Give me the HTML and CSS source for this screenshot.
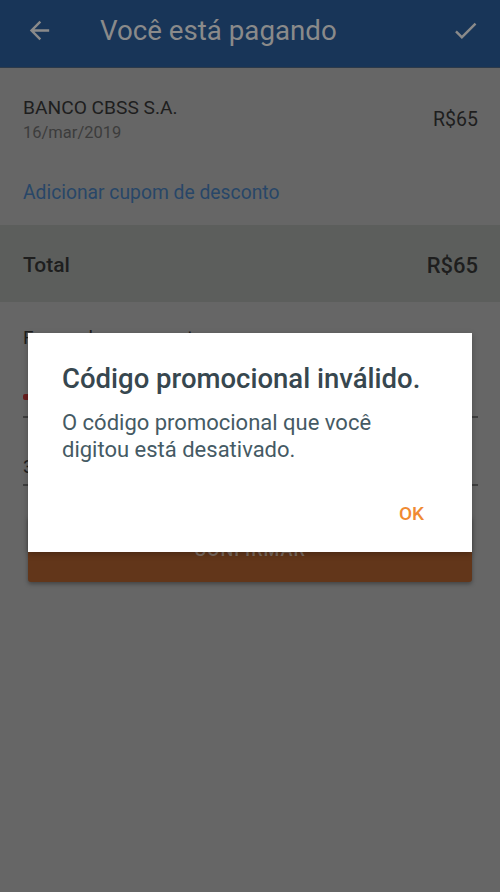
FILE: index.html
```html
<!DOCTYPE html>
<html lang="pt-BR">
<head>
<meta charset="utf-8">
<title>Você está pagando</title>
<link rel="stylesheet" href="styles.css">
</head>
<body>
<div class="screen">
  <header class="appbar">
    <svg class="icon back" viewBox="0 0 24 24" width="29" height="29"><path d="M20 11H7.83l5.59-5.59L12 4l-8 8 8 8 1.41-1.41L7.83 13H20v-2z"/></svg>
    <h1 class="title">Você está pagando</h1>
    <svg class="icon check" viewBox="0 0 24 24" width="29" height="29"><path d="M9 16.17L4.83 12l-1.42 1.41L9 19 21 7l-1.41-1.41z"/></svg>
  </header>

  <section class="item">
    <div class="item-info">
      <div class="item-name">BANCO CBSS S.A.</div>
      <div class="item-date">16/mar/2019</div>
    </div>
    <div class="item-value">R$65</div>
  </section>

  <div class="coupon">Adicionar cupom de desconto</div>

  <section class="total">
    <span class="total-label">Total</span>
    <span class="total-value">R$65</span>
  </section>

  <section class="payment">
    <div class="payment-label">Forma de pagamento</div>
    <div class="field field-card">
      <span class="card-dot"></span>
      <span class="field-text">Cartão de crédito</span>
    </div>
    <div class="field field-parcel">
      <span class="field-text">3x de R$21,67</span>
    </div>
    <button class="confirm">CONFIRMAR</button>
  </section>

  <div class="dialog">
    <h2 class="dialog-title">Código promocional inválido.</h2>
    <p class="dialog-text">O código promocional que você digitou está desativado.</p>
    <div class="dialog-actions">
      <button class="dialog-ok">OK</button>
    </div>
  </div>
</div>
</body>
</html>
```

FILE: styles.css
```css
* { box-sizing: border-box; }
html, body { margin: 0; padding: 0; }
body {
  background: #666666;
  font-family: Roboto, "Noto Sans", "Liberation Sans", sans-serif;
}
.screen {
  position: relative;
  width: 500px;
  height: 892px;
  overflow: hidden;
  background: #666666;
}
.appbar {
  height: 68px;
  background: #183558;
  display: flex;
  align-items: center;
  padding: 0 20px 0 25px;
  border-bottom: 1px solid #2c3a4a;
}
.icon { fill: #8a8a8a; flex: none; }
.back { margin-top: -6px; }
.check { margin-left: auto; margin-top: -6px; }
.title {
  margin: -6px 0 0 46px;
  font-size: 27.7px;
  font-weight: 400;
  color: #8a8a8a;
}
.item {
  display: flex;
  justify-content: space-between;
  align-items: center;
  padding: 28px 22px 0 23px;
}
.item-name {
  font-size: 19.2px;
  line-height: 23px;
  color: #1e1e1e;
}
.item-date {
  margin-top: 3px;
  font-size: 16.5px;
  line-height: 22px;
  color: #3c3c3c;
}
.item-value {
  font-size: 19.5px;
  color: #1e1e1e;
  margin-top: -2px;
}
.coupon {
  padding: 37px 23px 0;
  font-size: 19.3px;
  line-height: 24px;
  color: #284668;
}
.total {
  margin-top: 20px;
  height: 77px;
  background: #5c5e5c;
  display: flex;
  justify-content: space-between;
  align-items: center;
  padding: 3px 22px 0 23px;
  font-size: 21px;
  color: #1e1e1e;
}
.total-label { font-weight: 500; }
.total-value { font-weight: 500; font-size: 22px; }
.payment {
  padding: 24px 22px 0 23px;
}
.payment-label {
  font-size: 19px;
  color: #1e1e1e;
  line-height: 24px;
}
.field {
  display: flex;
  align-items: flex-end;
  gap: 8px;
  border-bottom: 2px solid #3e3e3e;
  font-size: 19px;
  color: #1e1e1e;
}
.field-card {
  height: 68px;
  padding-bottom: 10px;
}
.field-parcel {
  height: 68px;
  padding-bottom: 6px;
}
.card-dot {
  width: 10px;
  height: 6px;
  margin-bottom: 6px;
  background: #6a1e1e;
  border-radius: 2px;
}
.confirm {
  display: block;
  width: 444px;
  height: 66px;
  margin: 30px 0 0 5px;
  background: #62361a;
  border: 0;
  border-radius: 3px;
  box-shadow: 0 2px 4px rgba(0,0,0,0.35);
  color: #7a6a60;
  font-family: inherit;
  font-size: 18px;
  font-weight: 500;
  letter-spacing: 1px;
}
.dialog {
  position: absolute;
  left: 28px;
  top: 333px;
  width: 444px;
  height: 219px;
  background: #ffffff;
  padding: 30px 40px 0 34px;
  box-shadow: 0 2px 6px rgba(0,0,0,0.25);
}
.dialog-title {
  margin: 0;
  font-size: 27.5px;
  font-weight: 500;
  line-height: 32px;
  color: #37474f;
}
.dialog-text {
  margin: 14px 0 0;
  font-size: 22px;
  line-height: 27px;
  color: #455a64;
}
.dialog-actions {
  display: flex;
  justify-content: flex-end;
  margin-top: 40px;
}
.dialog-ok {
  background: none;
  border: 0;
  padding: 0 8px 0 0;
  font-family: inherit;
  font-size: 19px;
  font-weight: 500;
  line-height: 21px;
  color: #f08a32;
}
```
